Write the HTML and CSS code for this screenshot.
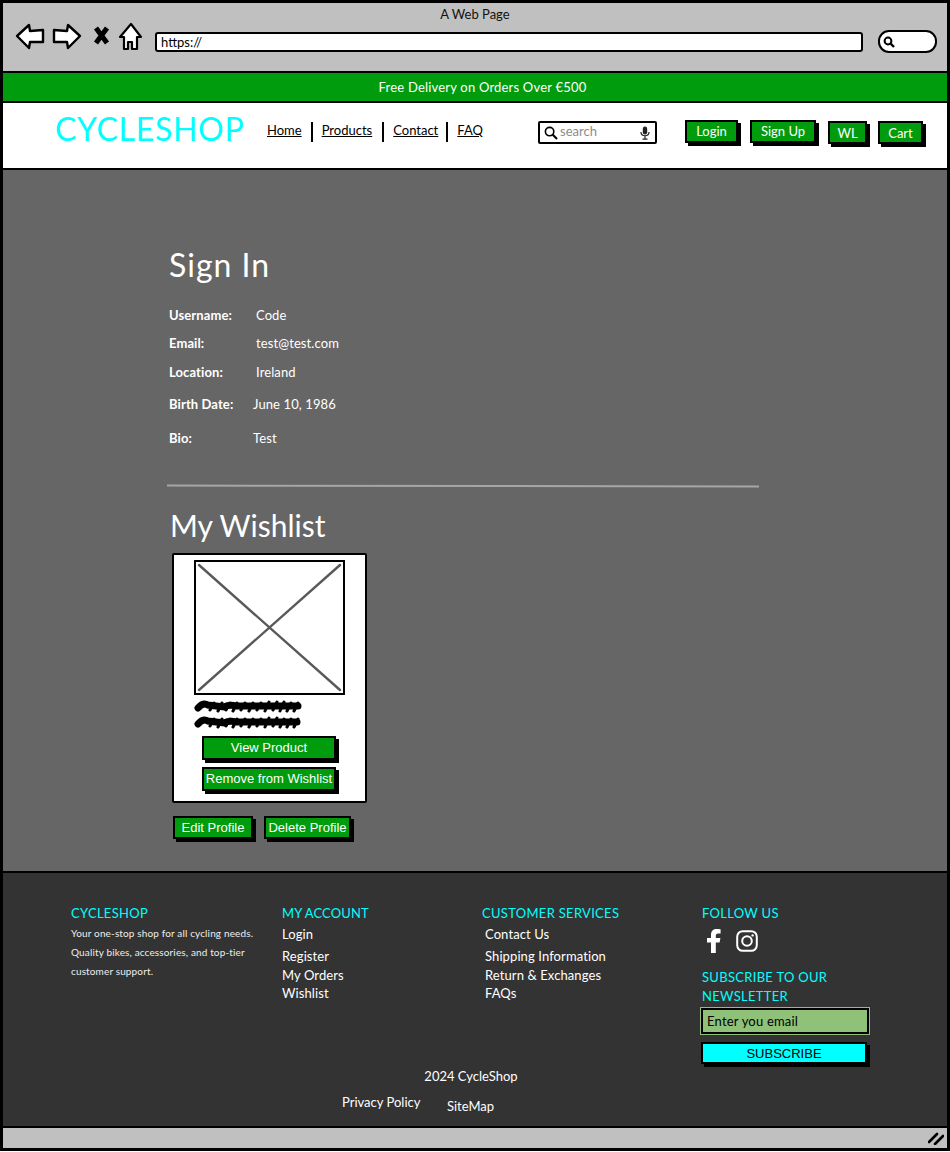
FILE: index.html
```html
<!DOCTYPE html>
<html>
<head lang="en">
    <meta charset="UTF-8">
    <title>A Web Page</title>
    <link rel="stylesheet" href="styles.css">
</head>
<body>
<div id="frame">
    <div id="chrome">
        <div class="chrome-title">A Web Page</div>
        <div class="chrome-bar">
            <svg class="chrome-icons" width="128" height="32" viewBox="0 0 128 32">
                <path d="M2 14 L14 3 L15 9 L28 8 L28 20 L15 20 L14 26 Z" fill="#fff" stroke="#000" stroke-width="2.4" stroke-linejoin="round"/>
                <path d="M65 14 L53 3 L52 9 L39 8 L39 20 L52 20 L53 26 Z" fill="#fff" stroke="#000" stroke-width="2.4" stroke-linejoin="round"/>
                <path d="M81 6 L92 21 M92 6 L81 21" fill="none" stroke="#000" stroke-width="5"/>
                <path d="M105 15 L116 2 L126 15 L122 15 L122 27 L117 27 L117 20 L113 20 L113 27 L109 27 L109 15 Z" fill="#fff" stroke="#000" stroke-width="2.2" stroke-linejoin="round"/>
            </svg>
            <div class="url-bar">https://</div>
            <div class="chrome-search">
                <svg width="12" height="12" viewBox="0 0 12 12">
                    <circle cx="5" cy="5" r="3.4" fill="none" stroke="#000" stroke-width="2"/>
                    <path d="M7.5 7.5 L11 11" stroke="#000" stroke-width="2.4"/>
                </svg>
            </div>
        </div>
    </div>

    <div id="promo">Free Delivery on Orders Over €500</div>

    <div id="header">
        <a class="logo">CYCLESHOP</a>
        <ul class="nav">
            <li><a>Home</a></li>
            <li><a>Products</a></li>
            <li><a>Contact</a></li>
            <li><a>FAQ</a></li>
        </ul>
        <div class="search">
            <svg width="14" height="14" viewBox="0 0 14 14">
                <circle cx="5.6" cy="5.6" r="4.2" fill="none" stroke="#000" stroke-width="1.6"/>
                <path d="M8.8 8.8 L13 13" stroke="#000" stroke-width="2"/>
            </svg>
            <span class="search-text">search</span>
            <svg width="10" height="14" viewBox="0 0 10 14">
                <rect x="2.8" y="0.5" width="4.4" height="8" rx="2.2" fill="#222"/>
                <path d="M1 6 C1 11 9 11 9 6 M5 10 L5 13 M2.5 13.2 L7.5 13.2" fill="none" stroke="#222" stroke-width="1.2"/>
            </svg>
        </div>
        <div class="header-btns">
            <a class="btn btn-login">Login</a>
            <a class="btn btn-signup">Sign Up</a>
            <a class="btn btn-wl">WL</a>
            <a class="btn btn-cart">Cart</a>
        </div>
    </div>

    <div id="main">
        <h1 class="page-title">Sign In</h1>
        <div class="info-row row-user"><b>Username:</b><span>Code</span></div>
        <div class="info-row row-email"><b>Email:</b><span>test@test.com</span></div>
        <div class="info-row row-loc"><b>Location:</b><span>Ireland</span></div>
        <div class="info-row row-birth"><b>Birth Date:</b><span>June 10, 1986</span></div>
        <div class="info-row row-bio"><b>Bio:</b><span>Test</span></div>
        <div class="rule"></div>
        <h1 class="wish-title">My Wishlist</h1>
        <div class="card">
            <svg class="placeholder" width="151" height="135" viewBox="0 0 151 135">
                <rect x="1" y="1" width="149" height="133" fill="#fff" stroke="#000" stroke-width="2"/>
                <path d="M5 5 L146 130 M146 5 L5 130" stroke="#595959" stroke-width="2.4" stroke-linecap="round"/>
            </svg>
            <svg class="scribble" width="110" height="32" viewBox="0 0 110 32">
                <g fill="none" stroke="#000" stroke-linecap="round">
                    <path d="M4 10 Q9 4 14 7 L30 9 Q36 6 42 8 L104 8" stroke-width="7"/>
                    <path d="M16 12 L20 5 M24 13 L28 5 M32 12 L36 5 M39 13 L43 5 M47 12 L51 5 M55 13 L59 5 M63 12 L67 5 M71 13 L75 4 M79 12 L83 4 M86 13 L90 4 M93 13 L97 5 M100 13 L104 5" stroke-width="3"/>
                    <path d="M4 26 Q9 20 14 23 L30 25 Q36 22 42 24 L103 24" stroke-width="7"/>
                    <path d="M16 28 L20 21 M24 29 L28 21 M32 28 L36 21 M39 29 L43 21 M47 28 L51 21 M55 29 L59 21 M63 28 L67 21 M71 29 L75 20 M79 28 L83 20 M86 29 L90 21 M93 29 L97 21 M100 29 L104 21" stroke-width="3"/>
                </g>
            </svg>
            <a class="btn card-btn">View Product</a>
            <a class="btn card-btn">Remove from Wishlist</a>
        </div>
        <div class="profile-btns">
            <a class="btn btn-edit">Edit Profile</a>
            <a class="btn btn-delete">Delete Profile</a>
        </div>
    </div>

    <div id="footer">
        <div class="foot-cols">
            <div class="foot-about">
                <h4>CYCLESHOP</h4>
                <p>Your one-stop shop for all cycling needs. Quality bikes, accessories, and top-tier customer support.</p>
            </div>
            <div class="foot-account">
                <h4>MY ACCOUNT</h4>
                <a class="first">Login</a>
                <a class="second">Register</a>
                <a>My Orders</a>
                <a class="last">Wishlist</a>
            </div>
            <div class="foot-service">
                <h4>CUSTOMER SERVICES</h4>
                <a class="first">Contact Us</a>
                <a class="second">Shipping Information</a>
                <a>Return &amp; Exchanges</a>
                <a class="last">FAQs</a>
            </div>
            <div class="foot-follow">
                <h4>FOLLOW US</h4>
                <div class="social">
                    <svg width="16" height="24" viewBox="0 0 16 24">
                        <path d="M5 24 V13.5 H1 V9 H5 V5.8 C5 2 7.4 0 10.6 0 C12.2 0 14 .2 14.6 .3 V4.4 H12.2 C10.4 4.4 9.8 5.4 9.8 6.6 V9 H14.4 L13.6 13.5 H9.8 V24 Z" fill="#fff"/>
                    </svg>
                    <svg width="22" height="22" viewBox="0 0 22 22">
                        <rect x="1.2" y="1.2" width="19.6" height="19.6" rx="5.5" fill="none" stroke="#fff" stroke-width="2"/>
                        <circle cx="11" cy="11" r="4.8" fill="none" stroke="#fff" stroke-width="2"/>
                        <circle cx="16.6" cy="5.4" r="1.2" fill="#fff"/>
                    </svg>
                </div>
                <h4 class="news-title">SUBSCRIBE TO OUR NEWSLETTER</h4>
                <div class="email-input">Enter you email</div>
                <a class="subscribe">SUBSCRIBE</a>
            </div>
        </div>
        <div class="copyright">2024 CycleShop</div>
        <div class="foot-links">
            <a class="privacy">Privacy Policy</a>
            <a class="sitemap">SiteMap</a>
        </div>
    </div>

    <div id="status">
        <svg width="16" height="13" viewBox="0 0 16 13">
            <path d="M1 10 L9 2 M7 12 L15 4" stroke="#000" stroke-width="2.6" stroke-linecap="round"/>
        </svg>
    </div>
</div>
</body>
</html>
```
FILE: styles.css
```css
*{
    margin: 0;
    padding: 0;
    box-sizing: border-box;
}
ul{
    list-style: none;
}
body{
    font-family: "Lato", "Liberation Sans", sans-serif;
    font-size: 13px;
    background: #fff;
}
#frame{
    width: 950px;
    height: 1151px;
    border: 3px solid #000;
    display: flex;
    flex-direction: column;
}

/* browser chrome */
#chrome{
    height: 70px;
    background: #c0c0c0;
    border-bottom: 2px solid #000;
    flex: none;
}
.chrome-title{
    text-align: center;
    color: #111;
    font-size: 13px;
    line-height: 16px;
    padding-top: 3px;
}
.chrome-bar{
    display: flex;
    align-items: flex-start;
    padding: 0 10px 0 12px;
}
.chrome-icons{
    flex: none;
    margin-right: 12px;
}
.url-bar{
    width: 708px;
    height: 20px;
    margin-top: 10px;
    background: #fff;
    border: 2px solid #000;
    border-radius: 3px;
    font-size: 13px;
    line-height: 16px;
    padding-left: 4px;
    color: #000;
}
.chrome-search{
    width: 59px;
    height: 23px;
    margin: 8px 0 0 15px;
    background: #fff;
    border: 2px solid #000;
    border-radius: 11px;
    padding: 4px 0 0 3px;
    line-height: 0;
}

/* promo strip */
#promo{
    height: 30px;
    flex: none;
    background: #009c0e;
    border-bottom: 2px solid #000;
    color: #fff;
    font-size: 13px;
    letter-spacing: .2px;
    line-height: 28px;
    text-align: center;
    padding-left: 15px;
}

/* site header */
#header{
    height: 67px;
    flex: none;
    background: #fff;
    border-bottom: 2px solid #000;
    display: flex;
    align-items: flex-start;
    padding-left: 52px;
}
.logo{
    color: #00ffff;
    font-size: 32px;
    letter-spacing: .7px;
    line-height: 36px;
    margin-top: 8px;
    width: 212px;
    flex: none;
}
.nav{
    display: flex;
    margin-top: 19px;
    width: 271px;
    flex: none;
}
.nav li{
    padding: 0 10px 0 9px;
    border-left: 2px solid #000;
    height: 20px;
    line-height: 17px;
    font-size: 13px;
}
.nav li:first-child{
    border-left: 0;
    padding-left: 0;
    padding-right: 9px;
}
.nav li:nth-child(3){
    padding-right: 8px;
}
.nav a{
    color: #000;
    text-decoration: underline;
}
.search{
    width: 119px;
    height: 23px;
    margin-top: 18px;
    border: 2px solid #000;
    border-radius: 2px;
    display: flex;
    align-items: center;
    padding: 0 5px 0 4px;
    flex: none;
}
.search-text{
    color: #8c8c8c;
    flex: 1;
    padding-left: 2px;
    line-height: 15px;
    padding-bottom: 2px;
    font-size: 13px;
}
.header-btns{
    display: flex;
    align-items: flex-start;
    margin-left: 28px;
    margin-top: 17px;
}
.btn{
    display: block;
    background: #009c0e;
    color: #fff;
    border: 2px solid #000;
    box-shadow: 3px 3px 0 #000;
    text-align: center;
    font-size: 13px;
}
.btn-login{
    width: 53px;
    height: 23px;
    line-height: 19px;
    margin-right: 12px;
}
.btn-signup{
    width: 66px;
    height: 23px;
    line-height: 19px;
    margin-right: 12px;
}
.btn-wl{
    width: 39px;
    height: 23px;
    margin-top: 1px;
    line-height: 21px;
    margin-right: 11px;
}
.btn-cart{
    width: 45px;
    height: 23px;
    margin-top: 1px;
    line-height: 21px;
}

/* account section */
#main{
    height: 703px;
    flex: none;
    background: #666;
    border-bottom: 2px solid #000;
    color: #fff;
    padding: 76px 0 0 166px;
}
.page-title{
    font-size: 32px;
    font-weight: 400;
    letter-spacing: 1px;
    line-height: 38px;
    margin-bottom: 23px;
}
.info-row{
    display: flex;
    line-height: 16px;
    font-size: 13px;
    letter-spacing: .1px;
}
.info-row b{
    width: 87px;
    flex: none;
}
.row-email{
    margin-top: 12px;
}
.row-loc{
    margin-top: 13px;
}
.row-birth{
    margin-top: 16px;
}
.row-bio{
    margin-top: 18px;
}
.row-birth b,
.row-bio b{
    width: 84px;
}
.rule{
    width: 592px;
    height: 2px;
    background: #a6a6a6;
    margin: 39px 0 0 -2px;
    transform: rotate(.1deg);
}
.wish-title{
    font-size: 30px;
    font-weight: 400;
    line-height: 38px;
    margin-top: 19px;
    margin-left: 1px;
}
.card{
    width: 195px;
    height: 250px;
    margin: 9px 0 0 3px;
    background: #fff;
    border: 2px solid #000;
    border-radius: 2px;
    padding: 5px 0 0 20px;
}
.placeholder{
    display: block;
}
.scribble{
    display: block;
    margin: 3px 0 0 0;
}
.card-btn{
    width: 134px;
    height: 24px;
    line-height: 20px;
    margin: 6px 0 0 8px;
    font-family: "Liberation Sans", sans-serif;
}
.card-btn + .card-btn{
    margin-top: 7px;
}
.profile-btns{
    display: flex;
    margin: 13px 0 0 4px;
}
.btn-edit{
    width: 80px;
    height: 23px;
    line-height: 20px;
    margin-right: 11px;
    font-family: "Liberation Sans", sans-serif;
}
.btn-delete{
    width: 87px;
    height: 23px;
    line-height: 20px;
    font-family: "Liberation Sans", sans-serif;
}

/* footer */
#footer{
    flex: 1;
    background: #333;
    border-bottom: 2px solid #000;
    color: #fff;
    padding-top: 32px;
}
.foot-cols{
    display: grid;
    grid-template-columns: 211px 200px 220px 180px;
    padding-left: 68px;
    height: 152px;
}
#footer h4{
    color: #00ffff;
    font-weight: 400;
    font-size: 13px;
    letter-spacing: .3px;
    line-height: 16px;
}
#footer .foot-account h4{
    letter-spacing: .1px;
}
.foot-about p{
    font-size: 10px;
    letter-spacing: .14px;
    line-height: 19px;
    width: 190px;
    margin-top: 3px;
    color: #eee;
}
.foot-account a,
.foot-service a{
    display: block;
    line-height: 18px;
    font-size: 13px;
    letter-spacing: .1px;
    margin-top: 1px;
}
.foot-account .first,
.foot-service .first{
    margin-top: 4px;
}
.foot-account .second,
.foot-service .second{
    margin-top: 4px;
}
.foot-account .last,
.foot-service .last{
    margin-top: 0;
}
.foot-service a{
    padding-left: 3px;
}
.social{
    display: flex;
    align-items: center;
    gap: 14px;
    padding: 8px 0 0 4px;
}
#footer .news-title{
    margin-top: 15px;
    line-height: 19px;
}
.email-input{
    width: 168px;
    height: 26px;
    margin: 2px 0 0 -1px;
    background: #8fc178;
    border: 2px solid #000;
    outline: 1px solid #8fc178;
    color: #000;
    line-height: 22px;
    padding-left: 4px;
    font-size: 13px;
    letter-spacing: .2px;
}
.subscribe{
    display: block;
    width: 166px;
    height: 22px;
    margin: 8px 0 0 -1px;
    background: #00ffff;
    border: 2px solid #000;
    box-shadow: 3px 3px 0 #000;
    color: #000;
    font-family: "Liberation Sans", sans-serif;
    font-size: 13px;
    line-height: 19px;
    text-align: center;
}
.copyright{
    text-align: center;
    font-size: 13px;
    line-height: 16px;
    margin: 11px 0 0 -8px;
}
.foot-links{
    display: flex;
    align-items: flex-start;
    padding-left: 339px;
    margin-top: 10px;
}
.privacy{
    width: 105px;
    line-height: 16px;
}
.sitemap{
    line-height: 16px;
    margin-top: 4px;
}

#status{
    height: 20px;
    flex: none;
    background: #c0c0c0;
    display: flex;
    justify-content: flex-end;
    align-items: center;
    padding-right: 3px;
}
```
